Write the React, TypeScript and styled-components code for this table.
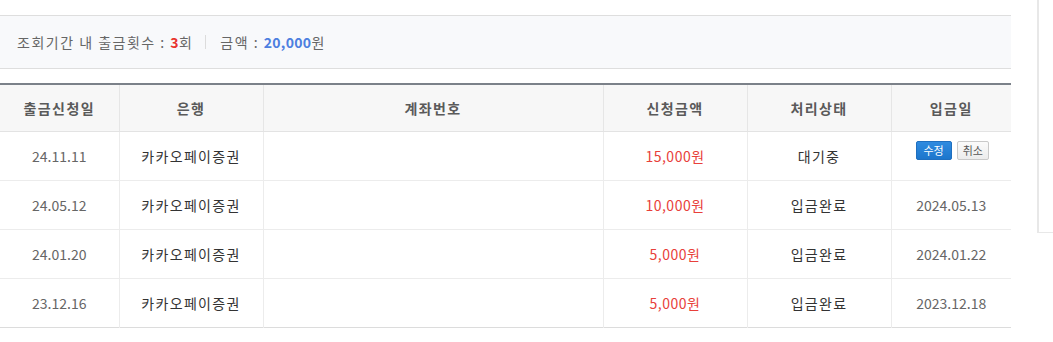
import React from "react";
import styled, { createGlobalStyle } from "styled-components";

const GlobalStyle = createGlobalStyle`
  html, body {
    margin: 0;
    padding: 0;
    background: #fff;
    overflow: hidden;
  }
  body {
    font-family: "Noto Sans CJK KR", "Noto Sans", sans-serif;
    font-size: 14px;
    color: #333;
  }
`;

const Page = styled.div`
  display: flex;
  align-items: flex-start;
  width: 1053px;
  height: 342px;
`;

const Main = styled.div`
  width: 1011px;
  flex-shrink: 0;
  padding-top: 15px;
`;

const SidePanel = styled.div`
  margin-left: 26px;
  width: 40px;
  height: 232px;
  flex-shrink: 0;
  border-left: 2px solid #e8e8e8;
  border-bottom: 1px solid #e8e8e8;
`;

const Summary = styled.div`
  height: 52px;
  display: flex;
  align-items: center;
  padding-left: 17px;
  background: #f8f9fb;
  border-top: 1px solid #dedede;
  border-bottom: 1px solid #dedede;
  color: #666;
  font-size: 14px;
  letter-spacing: 1.5px;
  white-space: pre;
`;

const Num = styled.b<{ $tone: "red" | "blue" }>`
  color: ${(p) => (p.$tone === "red" ? "#e8352f" : "#4d7fe0")};
  font-weight: 700;
  letter-spacing: 0.3px;
`;

const Divider = styled.span`
  display: inline-block;
  width: 1px;
  height: 14px;
  background: #dcdcdc;
  margin: 0 14px 0 12px;
`;

const Table = styled.table`
  width: 1011px;
  margin-top: 14px;
  border-collapse: collapse;
  table-layout: fixed;
  border-top: 2px solid #7b8189;
  border-bottom: 1px solid #dcdcdc;
`;

const Th = styled.th`
  height: 47px;
  padding: 0;
  box-sizing: border-box;
  background: #f7f7f7;
  color: #5a5a5a;
  font-weight: 700;
  font-size: 14px;
  letter-spacing: 1.4px;
  text-align: center;
  border-left: 1px solid #e6e6e6;
  border-bottom: 1px solid #e3e3e3;
  &:first-child {
    border-left: none;
  }
`;

const Td = styled.td<{ $color?: string; $spacing?: number }>`
  height: 49px;
  padding: 0;
  box-sizing: border-box;
  text-align: center;
  color: ${(p) => p.$color ?? "#666"};
  letter-spacing: ${(p) => p.$spacing ?? 0}px;
  border-left: 1px solid #ececec;
  border-top: 1px solid #ececec;
  vertical-align: middle;
  &:first-child {
    border-left: none;
  }
`;

const TopTd = styled(Td)`
  vertical-align: top;
  padding-top: 9px;
`;

const Buttons = styled.div`
  display: flex;
  justify-content: center;
  gap: 5px;
  padding-left: 2px;
  letter-spacing: 0;
`;

const SmallButton = styled.button<{ $primary?: boolean }>`
  height: 19px;
  padding: 0 5px;
  font-family: inherit;
  font-size: 11px;
  line-height: 17px;
  border-radius: 2px;
  cursor: pointer;
  border: 1px solid ${(p) => (p.$primary ? "#1f6fbf" : "#c9c9c9")};
  background: ${(p) => (p.$primary ? "linear-gradient(#2f8be0, #1c76cc)" : "linear-gradient(#fbfbfb, #ececec)")};
  color: ${(p) => (p.$primary ? "#fff" : "#555")};
  min-width: ${(p) => (p.$primary ? "36px" : "32px")};
`;

interface Row {
  date: string;
  bank: string;
  account: string;
  amount: string;
  status: string;
  paidOn?: string;
}

const rows: Row[] = [
  { date: "24.11.11", bank: "카카오페이증권", account: "", amount: "15,000원", status: "대기중" },
  { date: "24.05.12", bank: "카카오페이증권", account: "", amount: "10,000원", status: "입금완료", paidOn: "2024.05.13" },
  { date: "24.01.20", bank: "카카오페이증권", account: "", amount: "5,000원", status: "입금완료", paidOn: "2024.01.22" },
  { date: "23.12.16", bank: "카카오페이증권", account: "", amount: "5,000원", status: "입금완료", paidOn: "2023.12.18" },
];

const widths = [119, 144, 340, 144, 144, 120];

export default function App() {
  return (
    <>
      <GlobalStyle />
      <Page>
        <Main>
          <Summary>
            {"조회기간 내 출금횟수 : "}
            <Num $tone="red">3</Num>
            {"회"}
            <Divider />
            {"금액 : "}
            <Num $tone="blue">20,000</Num>
            {"원"}
          </Summary>
          <Table>
            <colgroup>
              {widths.map((w, i) => (
                <col key={i} style={{ width: w }} />
              ))}
            </colgroup>
            <thead>
              <tr>
                <Th>출금신청일</Th>
                <Th>은행</Th>
                <Th>계좌번호</Th>
                <Th>신청금액</Th>
                <Th>처리상태</Th>
                <Th>입금일</Th>
              </tr>
            </thead>
            <tbody>
              {rows.map((r, i) => (
                <tr key={i}>
                  <Td>{r.date}</Td>
                  <Td $color="#333" $spacing={1.3}>{r.bank}</Td>
                  <Td>{r.account}</Td>
                  <Td $color="#e8403a" $spacing={0.5}>{r.amount}</Td>
                  <Td $color="#333" $spacing={1.3}>{r.status}</Td>
                  {r.paidOn ? (
                    <Td>{r.paidOn}</Td>
                  ) : (
                    <TopTd>
                      <Buttons>
                        <SmallButton $primary>수정</SmallButton>
                        <SmallButton>취소</SmallButton>
                      </Buttons>
                    </TopTd>
                  )}
                </tr>
              ))}
            </tbody>
          </Table>
        </Main>
        <SidePanel />
      </Page>
    </>
  );
}
